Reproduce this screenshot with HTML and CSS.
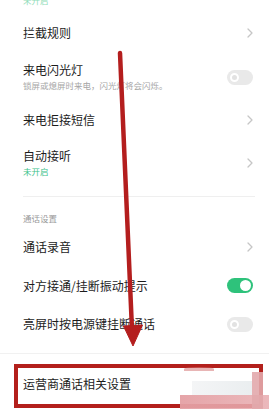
FILE: index.html
```html
<!DOCTYPE html>
<html lang="zh">
<head>
<meta charset="utf-8">
<link rel="stylesheet" href="styles.css">
</head>
<body>
<div class="page">
  <div class="stub">未开启</div>

  <div class="row h44">
    <span class="title">拦截规则</span>
    <span class="chev"><svg width="6" height="10" viewBox="0 0 6 10"><path d="M1 1 L5 5 L1 9" fill="none" stroke="#c6c6c6" stroke-width="1.3" stroke-linecap="round" stroke-linejoin="round"/></svg></span>
  </div>

  <div class="row h44">
    <div class="texts">
      <span class="title">来电闪光灯</span>
      <span class="sub">锁屏或熄屏时来电，闪光灯将会闪烁。</span>
    </div>
    <span class="toggle off"><span class="knob"></span></span>
  </div>

  <div class="row h42">
    <span class="title">来电拒接短信</span>
    <span class="chev"><svg width="6" height="10" viewBox="0 0 6 10"><path d="M1 1 L5 5 L1 9" fill="none" stroke="#c6c6c6" stroke-width="1.3" stroke-linecap="round" stroke-linejoin="round"/></svg></span>
  </div>

  <div class="row h44">
    <div class="texts">
      <span class="title">自动接听</span>
      <span class="sub green">未开启</span>
    </div>
    <span class="chev"><svg width="6" height="10" viewBox="0 0 6 10"><path d="M1 1 L5 5 L1 9" fill="none" stroke="#c6c6c6" stroke-width="1.3" stroke-linecap="round" stroke-linejoin="round"/></svg></span>
  </div>

  <div class="divider"></div>

  <div class="header">通话设置</div>

  <div class="row h38">
    <span class="title">通话录音</span>
    <span class="chev"><svg width="6" height="10" viewBox="0 0 6 10"><path d="M1 1 L5 5 L1 9" fill="none" stroke="#c6c6c6" stroke-width="1.3" stroke-linecap="round" stroke-linejoin="round"/></svg></span>
  </div>

  <div class="row h39">
    <span class="title">对方接通/挂断振动提示</span>
    <span class="toggle on"><span class="knob"></span></span>
  </div>

  <div class="row h38">
    <span class="title">亮屏时按电源键挂断通话</span>
    <span class="toggle off"><span class="knob"></span></span>
  </div>

  <div class="sep"></div>

  <div class="row h60">
    <span class="title">运营商通话相关设置</span>
  </div>

  <div class="redbox"></div>
  <div class="watermark">
    <span class="wm-arc"></span>
    <span class="wm-pale"></span>
    <span class="wm-band"></span>
    <span class="wm-col"></span>
  </div>

  <svg class="arrow" width="269" height="417" viewBox="0 0 269 417">
    <path d="M120 53 L132 330" stroke="#b41e1e" stroke-width="4.5" stroke-linecap="round" fill="none"/>
    <path d="M123.5 326 L142.5 325 L133 346 Z" fill="#b41e1e" stroke="#b41e1e" stroke-width="1" stroke-linejoin="round"/>
  </svg>
</div>
</body>
</html>
```

FILE: styles.css
```css
html, body {
  margin: 0;
  padding: 0;
  background: #ffffff;
}
body {
  width: 269px;
  height: 417px;
  overflow: hidden;
  font-family: "Noto Sans CJK SC", "Noto Sans", sans-serif;
  color: #1c1c1c;
}
.page {
  position: relative;
  width: 269px;
  height: 417px;
  overflow: hidden;
  display: flex;
  flex-direction: column;
}
.stub {
  margin-top: -5px;
  height: 16px;
  line-height: 10px;
  font-size: 8.5px;
  color: #8fdcb8;
  padding-left: 23px;
  flex: none;
}
.row {
  flex: none;
  display: flex;
  align-items: center;
  justify-content: space-between;
  padding: 0 16px 0 23px;
}
.h38 { height: 38px; }
.h39 { height: 39px; }
.h42 { height: 42px; }
.h44 { height: 44px; }
.h60 { height: 60px; }
.texts {
  display: flex;
  flex-direction: column;
  gap: 4px;
}
.title {
  font-size: 12px;
  line-height: 12px;
  color: #1c1c1c;
}
.sub {
  font-size: 8.5px;
  line-height: 10px;
  color: #a6a6a6;
}
.sub.green {
  color: #3cc28a;
}
.chev {
  display: flex;
  width: 6px;
  height: 10px;
}
.toggle {
  position: relative;
  width: 26px;
  height: 15px;
  border-radius: 8px;
  display: flex;
  align-items: center;
  box-sizing: border-box;
}
.toggle.off {
  background: #e9e9e9;
  padding-left: 3px;
}
.toggle.off .knob {
  width: 9px;
  height: 9px;
  border-radius: 50%;
  box-sizing: border-box;
  border: 2px solid #ffffff;
  background: #e2e2e2;
}
.toggle.on {
  background: #2ec27b;
  justify-content: flex-end;
  padding-right: 2px;
}
.toggle.on .knob {
  width: 11px;
  height: 11px;
  border-radius: 50%;
  background: #ffffff;
}
.divider {
  flex: none;
  margin: 11px 14px 0 23px;
  height: 1px;
  background: #efefef;
}
.header {
  flex: none;
  padding: 16px 0 5px 23px;
  font-size: 8.5px;
  line-height: 10px;
  color: #9a9a9a;
}
.sep {
  flex: none;
  margin-top: 10px;
  height: 1px;
  background: #f1f1f1;
}
.redbox {
  position: absolute;
  left: 14px;
  top: 364px;
  width: 249px;
  height: 44px;
  box-sizing: border-box;
  border: 4px solid #b3201c;
}
.watermark {
  position: absolute;
  left: 180px;
  top: 364px;
  width: 89px;
  height: 50px;
}
.wm-arc {
  position: absolute;
  left: 4px;
  top: 3px;
  width: 30px;
  height: 4px;
  border-radius: 50% 50% 0 0;
  background: rgba(214, 120, 120, 0.55);
}
.wm-pale {
  position: absolute;
  left: 12px;
  top: 17px;
  width: 60px;
  height: 14px;
  background: linear-gradient(90deg, rgba(236,238,240,0.6), rgba(232,236,238,0.9));
}
.wm-band {
  position: absolute;
  left: 0;
  top: 31px;
  width: 89px;
  height: 14px;
  background: linear-gradient(90deg, rgba(228,160,164,0.95), rgba(232,172,176,0.85));
}
.wm-col {
  position: absolute;
  left: 72px;
  top: 8px;
  width: 11px;
  height: 37px;
  background: rgba(226, 168, 172, 0.9);
}
.arrow {
  position: absolute;
  left: 0;
  top: 0;
  pointer-events: none;
}
```
